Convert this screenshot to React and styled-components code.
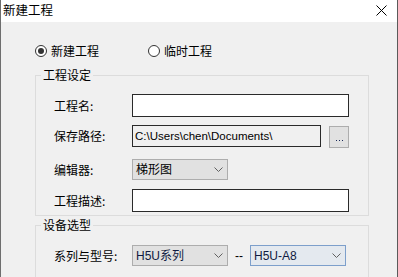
import React from "react";
import styled, { createGlobalStyle } from "styled-components";

const GlobalStyle = createGlobalStyle`
  html, body { margin: 0; padding: 0; background: #f0f0f0; }
  body { font-family: "Noto Sans CJK SC", "Noto Sans", sans-serif; font-size: 12px; color: #000; }
  * { box-sizing: border-box; }
`;

const Window = styled.div`
  width: 398px;
  height: 277px;
  display: flex;
  flex-direction: column;
  background: #f0f0f0;
  border-left: 1px solid #6e6e6e;
  border-right: 1px solid #5a5a5a;
  overflow: hidden;
`;

const TitleBar = styled.div`
  height: 22px;
  flex: none;
  background: #fff;
  display: flex;
  align-items: center;
  justify-content: space-between;
  padding: 0 10px 2px 2px;
`;

const Title = styled.span`
  font-size: 12.5px;
  line-height: 16px;
`;

const CloseButton = styled.span`
  display: flex;
  width: 11px;
  height: 11px;
  margin-top: 1px;
`;

const Body = styled.div`
  flex: 1;
  padding: 0 28px 0 34px;
  display: flex;
  flex-direction: column;
`;

const RadioRow = styled.div`
  display: flex;
  align-items: center;
  height: 16px;
  margin-top: 21px;
`;

const RadioItem = styled.label`
  display: flex;
  align-items: center;
  gap: 4px;
  width: ${(p) => p.$w}px;
  line-height: 16px;
`;

const RadioCircle = styled.span`
  width: 12px;
  height: 12px;
  border-radius: 50%;
  border: 1px solid #333;
  background: #fff;
  display: flex;
  align-items: center;
  justify-content: center;
  &::after {
    content: "";
    width: 6px;
    height: 6px;
    border-radius: 50%;
    background: #333;
    display: ${(p) => (p.$checked ? "block" : "none")};
  }
`;

const Group = styled.fieldset`
  margin: ${(p) => p.$mt}px 0 0 0;
  padding: 0;
  border: 1px solid #dcdcdc;
  min-width: 0;
`;

const Legend = styled.legend`
  margin-left: 5px;
  padding: 0 2px;
  line-height: 14px;
  font-size: 12px;
`;

const GroupContent = styled.div`
  padding: ${(p) => p.$pt}px 0 ${(p) => p.$pb}px 18px;
  display: flex;
  flex-direction: column;
`;

const Row = styled.div`
  display: flex;
  align-items: center;
  margin-top: ${(p) => p.$mt || 0}px;
`;

const Label = styled.span`
  width: 78px;
  flex: none;
  line-height: 16px;
`;

const TextBox = styled.div`
  width: ${(p) => p.$w}px;
  height: ${(p) => p.$h}px;
  border: 1px solid #2a2a2a;
  background: ${(p) => (p.$readOnly ? "#f0f0f0" : "#fff")};
  font-family: "Liberation Sans", "Noto Sans CJK SC", sans-serif;
  font-size: 11.5px;
  line-height: 18px;
  padding: 1px 2px;
  white-space: nowrap;
  overflow: hidden;
`;

const BrowseButton = styled.div`
  width: 20px;
  height: 22px;
  margin-left: 8px;
  margin-top: 2px;
  border: 1px solid #adadad;
  background: #e1e1e1;
  display: flex;
  align-items: flex-end;
  justify-content: center;
  padding-bottom: 6px;
  gap: 2px;
`;

const Dot = styled.span`
  width: 1px;
  height: 1px;
  background: #1a2a5a;
`;

const Combo = styled.div`
  width: 96px;
  height: 21px;
  border: 1px solid ${(p) => (p.$focused ? "#7d9fcb" : "#adadad")};
  background: ${(p) => (p.$focused ? "#e4e9ef" : "#e1e1e1")};
  display: flex;
  align-items: center;
  justify-content: space-between;
  padding: 0 4px 0 3px;
  font-family: "Liberation Sans", "Noto Sans CJK SC", sans-serif;
  font-size: 12px;
  line-height: 16px;
  color: ${(p) => (p.$latin ? "#101a40" : "#000")};
`;

const Dash = styled.span`
  width: 22px;
  text-align: center;
  font-family: "Liberation Sans", sans-serif;
  font-size: 12px;
  line-height: 16px;
`;

const Chevron = () => (
  <svg width="9" height="5" viewBox="0 0 9 5" style={{ flex: "none" }}>
    <path d="M0.5 0.5 L4.5 4.5 L8.5 0.5" fill="none" stroke="#606060" strokeWidth="1" />
  </svg>
);

export default function App() {
  return (
    <>
      <GlobalStyle />
      <Window>
        <TitleBar>
          <Title>新建工程</Title>
          <CloseButton>
            <svg width="11" height="11" viewBox="0 0 11 11">
              <path d="M0.5 0.5 L10.5 10.5 M10.5 0.5 L0.5 10.5" stroke="#000" strokeWidth="1" fill="none" />
            </svg>
          </CloseButton>
        </TitleBar>
        <Body>
          <RadioRow>
            <RadioItem $w={113}>
              <RadioCircle $checked />
              新建工程
            </RadioItem>
            <RadioItem $w={80}>
              <RadioCircle />
              临时工程
            </RadioItem>
          </RadioRow>

          <Group $mt={9}>
            <Legend>工程设定</Legend>
            <GroupContent $pt={12} $pb={3}>
              <Row>
                <Label>工程名:</Label>
                <TextBox $w={217} $h={23} />
              </Row>
              <Row $mt={7}>
                <Label>保存路径:</Label>
                <TextBox $w={189} $h={22} $readOnly>
                  C:\Users\chen\Documents\
                </TextBox>
                <BrowseButton>
                  <Dot />
                  <Dot />
                  <Dot />
                </BrowseButton>
              </Row>
              <Row $mt={11}>
                <Label>编辑器:</Label>
                <Combo>
                  <span>梯形图</span>
                  <Chevron />
                </Combo>
              </Row>
              <Row $mt={9}>
                <Label>工程描述:</Label>
                <TextBox $w={217} $h={23} />
              </Row>
            </GroupContent>
          </Group>

          <Group $mt={2}>
            <Legend>设备选型</Legend>
            <GroupContent $pt={13} $pb={20}>
              <Row>
                <Label>系列与型号:</Label>
                <Combo $latin>
                  <span>H5U系列</span>
                  <Chevron />
                </Combo>
                <Dash>--</Dash>
                <Combo $latin $focused>
                  <span>H5U-A8</span>
                  <Chevron />
                </Combo>
              </Row>
            </GroupContent>
          </Group>
        </Body>
      </Window>
    </>
  );
}
